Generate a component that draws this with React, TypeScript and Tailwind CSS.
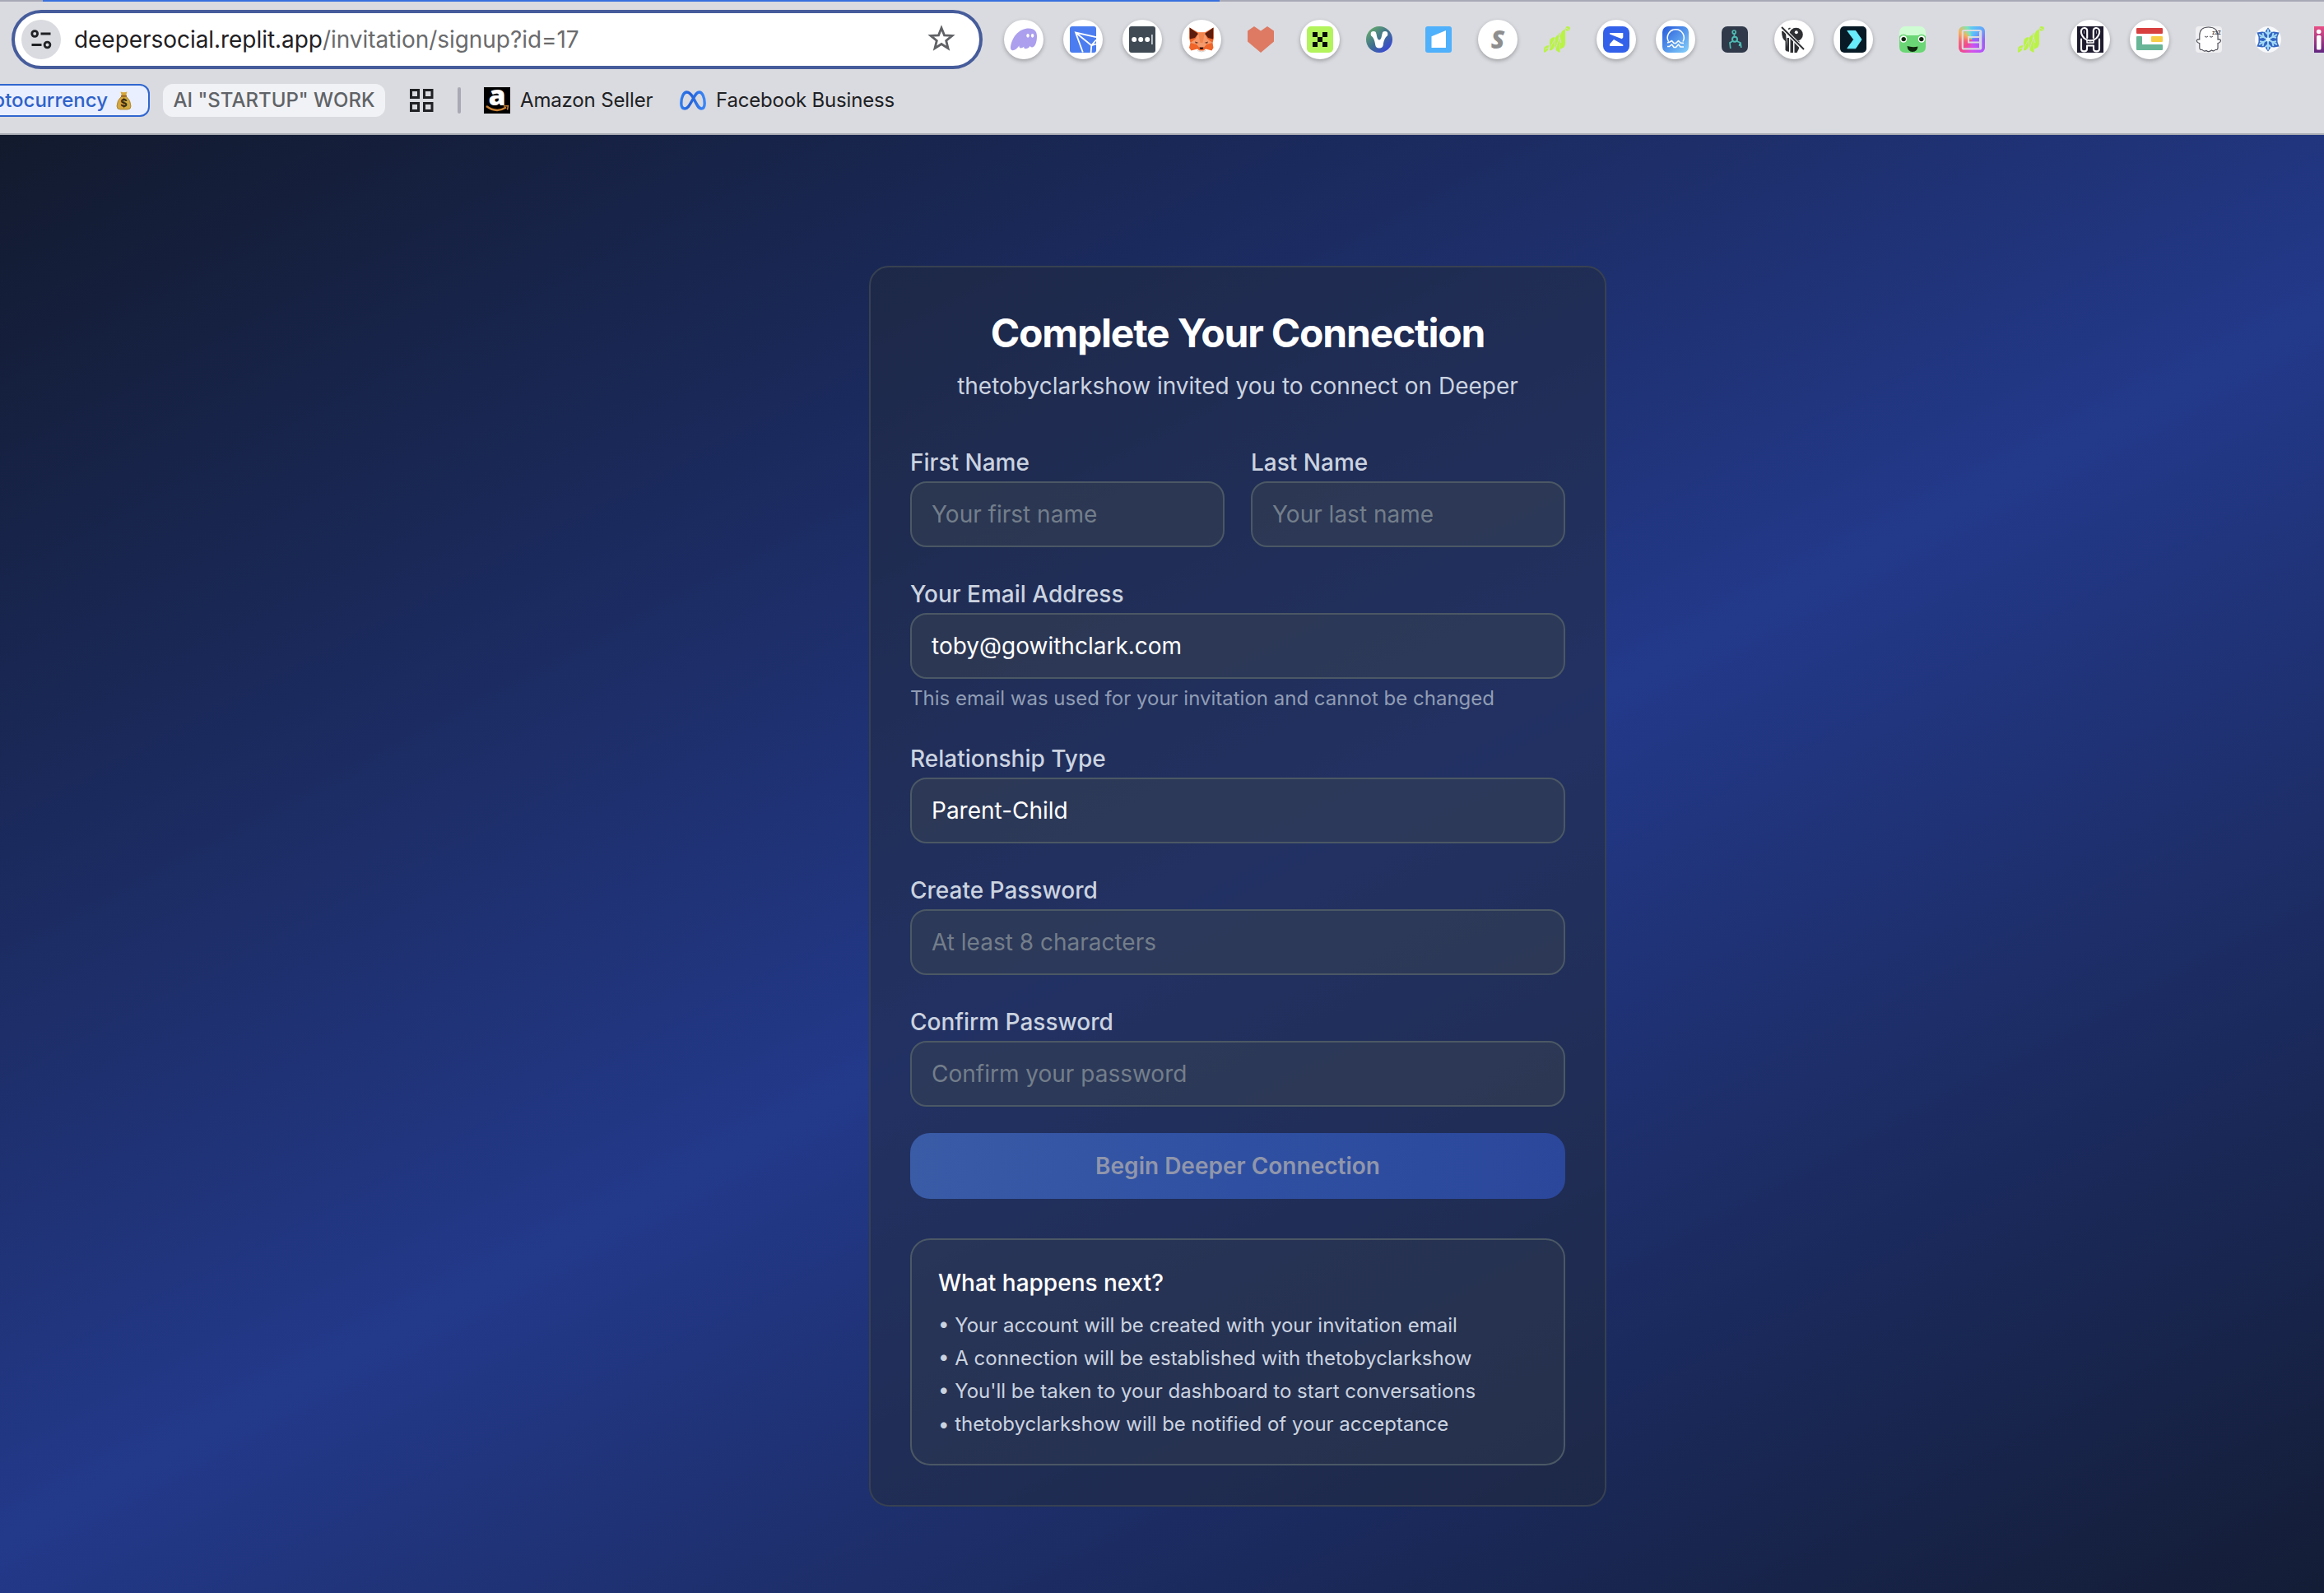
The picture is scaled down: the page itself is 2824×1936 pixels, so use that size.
import type { ReactNode } from 'react';

const ui = 'font-[Inter,sans-serif]';

function Round({ children }: { children: ReactNode }) {
  return (
    <div className="flex h-12 w-12 shrink-0 items-center justify-center rounded-full bg-white shadow-[0_2px_5px_rgba(0,0,0,0.28)]">
      {children}
    </div>
  );
}

function Bare({ children }: { children: ReactNode }) {
  return <div className="flex h-12 w-12 shrink-0 items-center justify-center">{children}</div>;
}

function Svg({ children }: { children: ReactNode }) {
  return (
    <svg className="overflow-visible" width="32" height="32" viewBox="0 0 32 32" fill="none">
      {children}
    </svg>
  );
}

function LimeBars() {
  return (
    <Svg>
      <g fill="#b9f344">
        <circle cx="29" cy="2.8" r="2.8" />
        <path d="M20 11 Q21 5 26 3.5 V21 Q26 26 20 27.5Z" />
        <path d="M13.5 14 L19.5 7.5 V32 Q13.5 30 13.5 25Z" />
        <path d="M7 20 Q7 13.5 12.8 13 V24 Q12 29 7 29.5Z" />
        <path d="M0 32 V27 Q1 23.5 6 23 Q6.5 30 0 32Z" />
      </g>
      <g stroke="#dadbe0" strokeWidth="0.8">
        <path d="M7 27 L13 16 M14 28 L19 13 M18 9 L21 20 M26 1.5 L31 4.5 M1 28 L6 26" />
      </g>
    </Svg>
  );
}

function Extensions() {
  return (
    <div className="flex shrink-0 gap-6">
      <Round>
        <Svg>
          <path d="M0 25 C2 12 11 2.6 22 2.6 C29 2.6 32 6.5 32 12 C32 20 29.5 25.5 26 25.5 C24.8 25.5 24 24.8 23.8 23.8 C22 26.5 20 27.3 18.4 27.3 C16.4 27.3 16 26 16.2 24.6 C14 27 11.6 27 10.8 25.6 C10.2 24.8 10.4 24 10.6 23.2 C8 27 5 29.2 2.8 29.2 C.8 29.2 -.4 27.6 0 25Z" fill="#ab9fee" />
          <ellipse cx="21" cy="11.3" rx="1.7" ry="2.4" fill="#fff" />
          <ellipse cx="26.6" cy="11.3" rx="1.7" ry="2.4" fill="#fff" />
        </Svg>
      </Round>
      <Round>
        <Svg>
          <rect width="32" height="32" rx="3" fill="#4b7df0" />
          <path d="M32 13.2 L7 7.5 L15.8 31.5 M7 7.5 L26.3 23.2 L32 21.5 M26.3 23.2 L25.6 32 M26.3 23.2 L32 16.5" stroke="#fff" strokeWidth="1.8" />
        </Svg>
      </Round>
      <Round>
        <Svg>
          <rect width="32" height="32" rx="3" fill="#3f4a54" />
          <circle cx="6.2" cy="16" r="3" fill="#fff" />
          <circle cx="14.2" cy="16" r="3" fill="#fff" />
          <circle cx="22.2" cy="16" r="3" fill="#fff" />
          <rect x="27" y="10" width="1.8" height="12" fill="#c8cdd2" />
        </Svg>
      </Round>
      <Round>
        <Svg>
          <path d="M1.5 1.5 L12 7.5 H20 L30.5 1.5 L31 14 L29.5 20 L30.5 26 L28.5 29.5 L21 27.5 L18.5 29.5 H13.5 L11 27.5 L3.5 29.5 L1 26 L2.5 20 L1 14Z" fill="#f0652a" />
          <path d="M12 7.5 H20 L23 15 L29.5 20 L22 22 L18.6 26 H13.4 L10 22 L2.5 20 L9 15Z" fill="#f59a6c" />
          <path d="M12 7.5 H20 L17.5 20 H14.5Z" fill="#f2844e" />
          <path d="M1.5 1.5 L12 9 L8 14 L2 15.5Z M30.5 1.5 L20 9 L24 14 L30 15.5Z" fill="#5c1d0e" />
          <path d="M8 18.5 L12.5 20 L9 20.8Z M24 18.5 L19.5 20 L23 20.8Z" fill="#5c2a1c" />
          <path d="M13.5 25.5 H18.5 L17.5 28 H14.5Z" fill="#27100b" />
          <path d="M11 29.5 Q16 32.5 21 29.5" stroke="#d8cfcb" strokeWidth="1" />
        </Svg>
      </Round>
      <Bare>
        <Svg>
          <path d="M8 0 L16 5.6 L24 0 L32 5.6 V18.5 L16 32 L0 18.5 V5.6Z" fill="#de7a63" />
        </Svg>
      </Bare>
      <Round>
        <Svg>
          <rect width="32" height="32" rx="5" fill="#b3f45c" />
          <path d="M7 7h6v6h-6z M19 7h6v6h-6z M13 13h6v6h-6z M7 19h6v6h-6z M19 19h6v6h-6z" fill="#060a04" />
        </Svg>
      </Round>
      <Bare>
        <Svg>
          <defs>
            <linearGradient id="vg" x1="0.15" y1="0.1" x2="0.85" y2="0.9">
              <stop offset="0" stopColor="#62a66e" />
              <stop offset="0.5" stopColor="#40708f" />
              <stop offset="1" stopColor="#3947d6" />
            </linearGradient>
          </defs>
          <circle cx="16" cy="16" r="16" fill="url(#vg)" />
          <circle cx="9" cy="9.2" r="3.3" fill="#fff" />
          <circle cx="23" cy="9.2" r="3.3" fill="#fff" />
          <path d="M6.2 11 L11.8 8 C13.4 11 13.2 16.5 16 16.5 C18.8 16.5 18.6 11 20.2 8 L25.8 11 C23 14 21.5 17 20.8 22.5 Q20.3 26.5 16 26.5 Q11.7 26.5 11.2 22.5 C10.5 17 9 14 6.2 11Z" fill="#fff" />
        </Svg>
      </Bare>
      <Bare>
        <Svg>
          <rect width="32" height="32" rx="3" fill="#4fb0fb" />
          <path d="M7.5 12.2 L25 5 V26 H7.5Z" fill="#fff" />
        </Svg>
      </Bare>
      <Round>
        <Svg>
          <text x="16" y="26.5" textAnchor="middle" fontFamily="Open Sans, sans-serif" fontSize="30" fontWeight="800" fontStyle="italic" fill="#8e8e8e">S</text>
        </Svg>
      </Round>
      <Bare>
        <LimeBars />
      </Bare>
      <Round>
        <Svg>
          <rect width="32" height="32" rx="8" fill="#3461ea" />
          <path d="M8 8 H24.3 V13.6 L22.8 15.3 L8 9.6Z M8 24 V21.5 L13 16 L24.3 22.3 V24Z" fill="#fff" />
        </Svg>
      </Round>
      <Round>
        <Svg>
          <defs>
            <linearGradient id="wg" x1="0" y1="0" x2="1" y2="1">
              <stop offset="0" stopColor="#2458da" />
              <stop offset="1" stopColor="#86d2fb" />
            </linearGradient>
          </defs>
          <rect width="32" height="32" rx="7" fill="url(#wg)" />
          <path d="M7.5 18.5 A10 10 0 1 1 25 18.5 M6 20 L9 19 L11.5 17.5 L14 20.5 L16.5 20.5 L19.5 17.5 L22 20 L26 20.5 M6 24.5 L8.5 24.5 L11.5 22 L14 25.5 L16.5 25.5 L19.5 22 L22 25 L26 25" stroke="#fff" strokeWidth="1.5" strokeLinejoin="round" />
        </Svg>
      </Round>
      <Bare>
        <Svg>
          <rect width="32" height="32" rx="7" fill="#2f3949" />
          <g stroke="#4fbcb4" strokeWidth="1.7">
            <circle cx="15.2" cy="7" r="2" />
            <path d="M15.4 9 V12.5 M13.5 18 L10 20 L10.8 27 M18.5 18 L23 20 L23.8 26 M22 21 L21.5 24" />
            <circle cx="16" cy="15.8" r="3" strokeWidth="2" />
          </g>
        </Svg>
      </Bare>
      <Round>
        <Svg>
          <path d="M1 6 Q5 5 6 8 L8 31 L5.5 29 V18 Q1 15 1 6Z M10 14 V31 L7.5 30 V14Z M11.5 12 H15 V32 H11.5Z M16.5 18 H22.5 L22 27 L19.5 32 H16.5Z" fill="#2f3033" />
          <circle cx="18.5" cy="10" r="8.3" fill="#2f3033" />
          <circle cx="18.8" cy="7.3" r="2" fill="#fff" />
          <path d="M1 1 L28 28.5" stroke="#fff" strokeWidth="4.5" />
          <path d="M1 1 L28 28" stroke="#2f3033" strokeWidth="1.9" />
          <path d="M9 3.5 L11.5 2.2" stroke="#2f3033" strokeWidth="1.5" />
        </Svg>
      </Round>
      <Round>
        <Svg>
          <rect width="32" height="32" rx="5" fill="#081a25" />
          <path d="M8.8 5.4 H18.8 L26 16 L18.8 26.8 H8.8 L16.6 16Z" fill="#68ebfb" stroke="#68ebfb" strokeWidth="1" strokeLinejoin="round" />
        </Svg>
      </Round>
      <Bare>
        <Svg>
          <rect width="32" height="32" rx="7" fill="#cffcd2" />
          <path d="M0 12 Q4 8 9 11 H23 Q28 8 32 12 V25 Q32 32 25 32 H7 Q0 32 0 25Z" fill="#6bd675" />
          <circle cx="5" cy="15.5" r="4.2" fill="#fff" />
          <circle cx="27" cy="15.5" r="4.2" fill="#fff" />
          <circle cx="5.2" cy="15.6" r="2.7" fill="#11240f" />
          <circle cx="26.8" cy="15.6" r="2.7" fill="#11240f" />
          <path d="M9.5 24 Q16 26 22.5 24.5 Q22 31 16 31 Q10 31 9.5 24Z" fill="#10260f" />
        </Svg>
      </Bare>
      <Bare>
        <div className="h-8 w-8 rounded-[6px] bg-[conic-gradient(from_0deg,#5cc8f5,#61a9fb_12%,#9266f7_25%,#b455fa_38%,#d552e8_50%,#ef4a8c_62%,#f5677a_72%,#f7b15a_84%,#7fe6b4_94%,#5cc8f5)]">
          <svg width="32" height="32" viewBox="0 0 32 32" fill="none">
            <rect x="4.8" y="5" width="22.4" height="22.4" rx="1.5" stroke="#dadbe0" strokeWidth="2.2" />
            <path d="M12 12 H26 V14 H12Z M12 18.5 H26 V20.5 H12Z M11 12 H13 V20.5 H11Z" fill="#dadbe0" />
            <rect x="25" y="6.5" width="3" height="20" fill="#dadbe0" />
          </svg>
        </div>
      </Bare>
      <Bare>
        <LimeBars />
      </Bare>
      <Round>
        <Svg>
          <rect width="32" height="32" fill="#1f1c2f" />
          <g stroke="#fff" strokeWidth="2.1" strokeLinecap="round" strokeLinejoin="round">
            <path d="M12.2 14 V5 C12 1.5 7 .8 5.4 4 C3.6 8.5 7 14.5 12 16.6 C14.5 17.6 17.5 17.6 20 16.6 C25 14.5 28.4 8.5 26.6 4 C25 .8 20 1.5 19.8 5 V14" />
            <path d="M8.5 5.5 V8.5 M23.5 5.5 V8.5" strokeWidth="0.6" />
            <path d="M5 15.5 V27.5 Q5 30.4 8.4 30.4 Q12 30.4 12 27.5 V23.5 H20 V27.5 Q20 30.4 23.6 30.4 Q27 30.4 27 27.5 V15.5" />
            <path d="M12 17 V20 H20 V17" strokeWidth="1.6" />
          </g>
        </Svg>
      </Round>
      <Round>
        <Svg>
          <rect y="2" width="32" height="7" rx="1" fill="#d84040" />
          <rect x="18" y="12" width="14" height="7" rx="1" fill="#f7cd46" />
          <path d="M1 12 H6 Q7 12 7 13 V22 H31 Q32 22 32 23 V28 Q32 29 31 29 H1 Q0 29 0 28 V13 Q0 12 1 12Z" fill="#68b598" />
        </Svg>
      </Round>
      <Bare>
        <Svg>
          <rect width="32" height="32" rx="4" fill="#f0f0f2" />
          <path d="M4.8 15 V11 Q5 1 15.5 1 Q26.5 1 27 11 V16 Q30.5 15.5 30.5 17.5 Q30 20 27 20.5 V26 Q27 29 24 28.5 Q22 31 19.5 29 Q16 32 13 29.5 Q10 31 8 28.5 Q4.8 29 4.8 26 V20.5 Q1.5 20 1.3 17.5 Q1.5 15.5 4.8 16Z" fill="#fff" stroke="#4a4b54" strokeWidth="1.1" />
          <path d="M11 12 Q13 14.5 15 12 M17 12 Q19 14.5 21 12" stroke="#4a4b54" strokeWidth="1" />
          <text x="20" y="10" fontFamily="Inter, sans-serif" fontSize="6" fontWeight="700" fill="#4a4b54">zzZ</text>
        </Svg>
      </Bare>
      <Bare>
        <Svg>
          <circle cx="16" cy="16" r="16" fill="#f7f8fa" />
          <path d="M16 1.5 L20 7 L23 6.5 L29.5 7.5 L27.5 13 V19 L29.5 24.5 L23 25.5 L20 25 L16 30.5 L12 25 L9 25.5 L2.5 24.5 L4.5 19 V13 L2.5 7.5 L9 6.5 L12 7Z" fill="#3466c4" />
          <g stroke="#a6dcf6" strokeWidth="1.9">
            <path d="M16 3.5 V28.5 M5 9.8 L27 22.2 M27 9.8 L5 22.2" />
            <path d="M12.5 6.5 L16 10 L19.5 6.5 M12.5 25.5 L16 22 L19.5 25.5 M6 13.8 L10.8 12.8 L9.5 8 M26 13.8 L21.2 12.8 L22.5 8 M6 18.2 L10.8 19.2 L9.5 24 M26 18.2 L21.2 19.2 L22.5 24" />
          </g>
          <circle cx="16" cy="16" r="2.5" fill="#d8f1fc" />
        </Svg>
      </Bare>
      <Bare>
        <Svg>
          <defs>
            <linearGradient id="ig" x1="0" y1="0" x2="0" y2="1">
              <stop offset="0" stopColor="#ea4f86" />
              <stop offset="1" stopColor="#5f2580" />
            </linearGradient>
          </defs>
          <rect width="32" height="32" fill="url(#ig)" />
          <circle cx="5.7" cy="6.5" r="2.8" fill="#fff" />
          <rect x="3" y="11" width="5.5" height="17.5" rx="1.5" fill="#fff" />
        </Svg>
      </Bare>
    </div>
  );
}

function Toolbar() {
  return (
    <header className={`${ui} h-[164px] overflow-hidden border-b-2 border-[#a9abb3] bg-[#dadbe0]`}>
      <div className="flex h-0.5 bg-[#a8a9b6]">
        <div className="ml-[52px] w-[1430px] bg-[#3870de]" />
      </div>
      <div className="mt-2.5 flex w-[3000px] items-center pl-[14px]">
        <div className="flex h-[72px] w-[1180px] items-center rounded-full border-4 border-[#465c9b] bg-white pl-2">
          <div className="flex h-12 w-12 shrink-0 items-center justify-center rounded-full bg-[#dadbe0]">
            <svg width="26" height="26" viewBox="0 0 26 26" fill="none" stroke="#1f2124" strokeWidth="2.8">
              <circle cx="5.2" cy="6" r="3.4" />
              <path d="M12.5 6 H24.5 M1.5 19.5 H13.5" />
              <circle cx="20.5" cy="19.5" r="3.4" />
            </svg>
          </div>
          <div className="ml-4 w-[1036px] shrink-0 whitespace-nowrap text-[28px] leading-9 tracking-[-0.05px] text-[#6a6b6d]">
            <span className="text-[#1f2023]">deepersocial.replit.app</span>/invitation/signup?id=17
          </div>
          <svg className="mb-0.5 shrink-0" width="36" height="36" viewBox="0 0 36 36" fill="none" stroke="#5f6164" strokeWidth="2.8">
            <path d="M18 5 L21.5 13.8 L31 14.4 L23.7 20.4 L26 29.7 L18 24.5 L10 29.7 L12.3 20.4 L5 14.4 L14.5 13.8Z" />
          </svg>
        </div>
        <div className="ml-[26px]">
          <Extensions />
        </div>
      </div>
      <div className="mt-[18px] flex h-10 items-center whitespace-nowrap text-[24px] text-[#202124]">
        <div className="flex h-10 w-[182px] items-center justify-end rounded-r-xl border-2 border-l-0 border-[#3066cf] bg-[#e9efff] pr-[20px] font-medium text-[#2f62c9]">
          <span>ptocurrency</span>
          <svg className="ml-[10px] shrink-0" width="19" height="24" viewBox="0 0 19 24">
            <path d="M5.5 1.5 Q9.5 3 13.5 1.5 L12 6.5 H7Z" fill="#d6a83c" />
            <path d="M6.8 7 H12.2 Q18 12 18 19 Q18 23 14 23 H5 Q1 23 1 19 Q1 12 6.8 7Z" fill="#d3a942" stroke="#a57a24" strokeWidth="0.8" />
            <rect x="6" y="5.8" width="7" height="1.8" fill="#96621f" />
            <text x="9.5" y="20" textAnchor="middle" fontFamily="Inter, sans-serif" fontSize="13" fontWeight="700" fill="#3a2b12">$</text>
          </svg>
        </div>
        <div className="ml-4 flex h-10 w-[270px] items-center justify-center rounded-xl bg-[#f1f2f5] font-medium text-[#606367]">
          AI "STARTUP" WORK
        </div>
        <svg className="ml-[30px]" width="29" height="28" viewBox="0 0 29 28" fill="none" stroke="#202124" strokeWidth="3">
          <path d="M1.5 1.5h9v9h-9z M17.5 1.5h9.5v9h-9.5z M1.5 17.5h9v9h-9z M17.5 17.5h9.5v9h-9.5z" />
        </svg>
        <div className="ml-[29px] h-8 w-1 rounded-full bg-[#a9a9b6]" />
        <svg className="ml-7 overflow-visible" width="32" height="32" viewBox="0 0 32 32">
          <rect width="32" height="32" fill="#000" />
          <text x="16" y="22.3" textAnchor="middle" fontFamily="Open Sans, sans-serif" fontSize="34" fontWeight="800" fill="#fff">a</text>
          <path d="M3 23 Q15 32 27 24.5" stroke="#c98235" strokeWidth="2.4" fill="none" />
          <path d="M24 23 L29.5 22.5 L28.5 27.5" stroke="#c98235" strokeWidth="1.5" fill="none" />
        </svg>
        <span className="ml-[12px] w-[162px] tracking-[-0.15px]">Amazon Seller</span>
        <svg className="ml-[32px]" width="32" height="24" viewBox="0 0 32 24" fill="none">
          <defs>
            <linearGradient id="mg" x1="0" y1="0" x2="1" y2="0">
              <stop offset="0" stopColor="#2f7ef0" />
              <stop offset="0.35" stopColor="#2360d8" />
              <stop offset="1" stopColor="#3b86f7" />
            </linearGradient>
          </defs>
          <path d="M16 8 C13 3.5 11 2 8.6 2 C4.5 2 1.8 8.5 1.8 15.5 C1.8 19.5 3.4 22 6.2 22 C9.6 22 11.5 18.5 16 10.5 C19 5 20.5 2 23.6 2 C27.6 2 30.2 8.5 30.2 15.5 C30.2 19.5 28.8 22 26.2 22 C22.8 22 20.4 17 16 8Z" stroke="url(#mg)" strokeWidth="3.4" />
        </svg>
        <span className="ml-[12px] tracking-[-0.18px]">Facebook Business</span>
      </div>
    </header>
  );
}

function Field({ label, value, placeholder, hint }: { label: string; value?: string; placeholder?: string; hint?: string }) {
  return (
    <div className="min-w-0 flex-1">
      <label className="block pt-0.5 text-[28px] font-medium leading-[46px] text-[#cbd3e0]">{label}</label>
      <div className="flex h-20 items-center rounded-[20px] border-2 border-[#4b5865] bg-[#374151]/50 px-6 text-[28px]">
        {value ? <span className="text-white">{value}</span> : <span className="text-[#737e8b]">{placeholder}</span>}
      </div>
      {hint && <p className="mt-2 text-[24px] leading-8 text-[#909db5]">{hint}</p>}
    </div>
  );
}

const steps = [
  'Your account will be created with your invitation email',
  'A connection will be established with thetobyclarkshow',
  "You'll be taken to your dashboard to start conversations",
  'thetobyclarkshow will be notified of your acceptance',
];

export default function App() {
  return (
    <div className="flex h-[1936px] w-[2824px] flex-col overflow-hidden">
      <Toolbar />
      <div className="h-[1772px] overflow-hidden">
        <main
          className={`${ui} -ml-[224px] flex h-[1826px] w-[3456px] items-center justify-center bg-[linear-gradient(to_bottom_right,#111827,#23398a,#111827)]`}
        >
          <section className="w-[896px] rounded-3xl border-2 border-[#374151] bg-[#212a3c]/50 p-12">
            <div className="mb-12 text-center">
              <h1 className="text-[48px] font-bold leading-[64px] tracking-tight text-white">Complete Your Connection</h1>
              <p className="mt-3 text-[28px] leading-10 text-[#cbd3e0]">thetobyclarkshow invited you to connect on Deeper</p>
            </div>
            <form className="flex flex-col gap-8">
              <div className="flex gap-8">
                <Field label="First Name" placeholder="Your first name" />
                <Field label="Last Name" placeholder="Your last name" />
              </div>
              <Field label="Your Email Address" value="toby@gowithclark.com" hint="This email was used for your invitation and cannot be changed" />
              <Field label="Relationship Type" value="Parent-Child" />
              <Field label="Create Password" placeholder="At least 8 characters" />
              <Field label="Confirm Password" placeholder="Confirm your password" />
              <button
                type="button"
                className="h-20 rounded-3xl bg-[linear-gradient(to_right,#3a5ba6,#2f50a2,#2b479b)] text-[28px] font-semibold text-[#9096ac]"
              >
                Begin Deeper Connection
              </button>
            </form>
            <div className="mt-12 rounded-3xl border-2 border-[#4b5865] bg-[#374151]/30 p-8">
              <h2 className="mb-4 text-[28px] font-medium leading-10 text-white">What happens next?</h2>
              <ul className="flex flex-col gap-2 text-[24px] leading-8 text-[#cbd3e0]">
                {steps.map((s) => (
                  <li key={s}>• {s}</li>
                ))}
              </ul>
            </div>
          </section>
        </main>
      </div>
    </div>
  );
}
